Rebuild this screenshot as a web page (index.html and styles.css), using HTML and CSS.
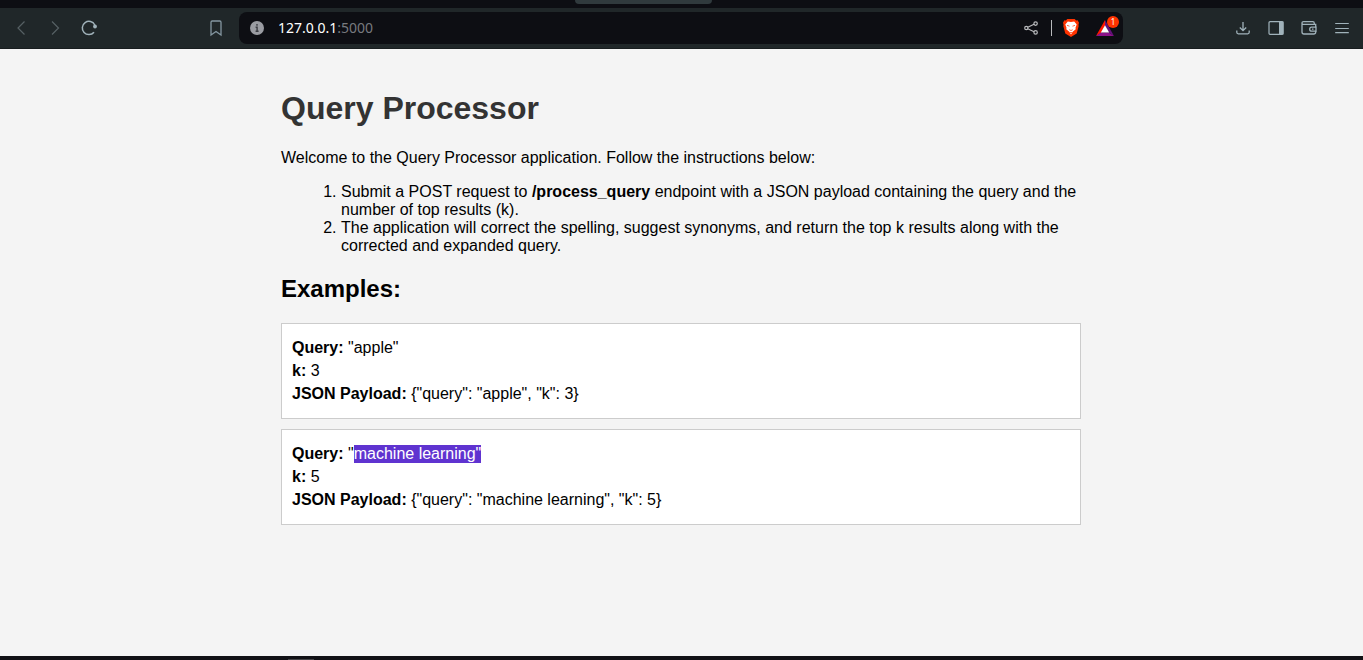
FILE: index.html
```html
<!DOCTYPE html>
<html lang="en">
<head>
<meta charset="utf-8">
<title>Query Processor</title>
<link rel="stylesheet" href="styles.css">
</head>
<body>
<div class="tab-strip"><div class="tab-group"></div></div>
<header class="toolbar">
  <nav class="nav" aria-label="Navigation">
    <button class="icon-button dim" aria-label="Back"><svg width="20" height="20" viewBox="0 0 20 20"><path d="M13.500 3.500 7 10l6.500 6.500"/></svg></button>
    <button class="icon-button dim" aria-label="Forward"><svg width="20" height="20" viewBox="0 0 20 20"><path d="M7 3.500 13.500 10 7 16.500"/></svg></button>
    <button class="icon-button" aria-label="Reload"><svg width="20" height="20" viewBox="0 0 20 20"><path d="M15 14.200A6.600 6.600 0 1 1 15.800 7" stroke-width="1.500"/><circle cx="16" cy="8.500" r="1.900" fill="currentColor" stroke="none"/></svg></button>
    <button class="icon-button bookmark" aria-label="Bookmark"><svg width="20" height="20" viewBox="0 0 20 20"><path d="M5 4.200q0-1.200 1.200-1.200h7.600q1.200 0 1.200 1.200V17l-5-3.500L5 17z" stroke-width="1.300"/></svg></button>
  </nav>
  <div class="address">
    <svg class="info" width="14" height="14" viewBox="0 0 14 14"><circle cx="7" cy="7" r="7" fill="#9a9ca2"/><path d="M7 3v1.700M5.600 6.300H7.100V10M5.600 10.200h3" stroke="#3b3d43" stroke-width="1.400" fill="none"/></svg>
    <div class="url">127.0.0.1<span class="port">:5000</span></div>
    <div class="address-actions">
      <button class="icon-button share" aria-label="Share"><svg width="14" height="14" viewBox="0 0 14 14"><path d="m3.800 6.300 6.200-3M3.800 7.700l6.200 3" stroke-width="1.200"/><circle cx="2.300" cy="7" r="1.600"/><circle cx="11.600" cy="2.600" r="1.700"/><circle cx="11.600" cy="11.400" r="1.700"/></svg></button>
      <span class="divider"></span>
      <button class="icon-button shield" aria-label="Shields"><svg width="18" height="20" viewBox="0 0 18 20"><path d="M5.300 1h7.400l1.400 1.500 1.500-.2L17 4.800l-.6 2.200.3 1-2 7.500L9 19l-5.700-3.500-2-7.500.3-1L1 4.800l1.400-2.500 1.500.2z" fill="#ff3300" stroke="none"/><path d="M5.800 3.500 9 4l3.200-.5 2.500 3-1.200 3.300.2 1.400-3 2.500L9 16.500l-1.700-2.800-3-2.500.2-1.400-1.200-3.300z" fill="#fff" stroke="none"/><path d="m5 7.300 2.500.9M13 7.300l-2.500.9M7.300 11.700l1.700.8 1.700-.8M8 14.500h2" stroke="#ff5b35" stroke-width=".9"/></svg></button>
      <button class="icon-button rewards" aria-label="Rewards, 1 notification"><svg width="18" height="16" viewBox="0 0 18 16"><path d="M9 0v6l-4 7-5 3z" fill="#ff1600" stroke="none"/><path d="m0 16 5-3.600h8L18 16z" fill="#8b1289" stroke="none"/><path d="m9 0 9 16-5-3.600L9 6z" fill="#64117c" stroke="none"/><path d="m9 5.300 4.200 7.300H4.800z" fill="#fff" stroke="none"/></svg><span class="badge">1</span></button>
    </div>
  </div>
  <div class="tools">
    <button class="icon-button" aria-label="Downloads"><svg width="16" height="16" viewBox="0 0 16 16"><path d="M8 2v8.500M4.800 7.500 8 10.700l3.200-3.200M1.800 10.500v1.800q0 1.500 1.500 1.500h9.400q1.500 0 1.500-1.500v-1.800" stroke-width="1.300"/></svg></button>
    <button class="icon-button" aria-label="Sidebar"><svg width="16" height="16" viewBox="0 0 16 16"><rect x="1" y="1.700" width="14" height="12.600" rx="1"/><path d="M11 1.500h4.500v13H11z" fill="currentColor" stroke="none"/></svg></button>
    <button class="icon-button" aria-label="Wallet"><svg width="16" height="16" viewBox="0 0 16 16"><path d="M14.700 4.800v-.5H2.500Q1 4.300 1 3t1.500-1.300h9.300q1.500 0 1.500 1.500v1M1 3v9q0 2 2 2h9.700q2 0 2-2v-1M14.700 4.500v2.700" stroke-width="1.300"/><path d="M15 7.200h-4.300a2 2 0 0 0 0 4H15z" stroke-width="1.300"/><path d="M11 9.200h1.500" stroke-width="1.300"/></svg></button>
    <button class="icon-button" aria-label="Menu"><svg width="16" height="16" viewBox="0 0 16 16"><path d="M1.200 3.500h13.600M1.200 8.500h13.600M1.200 12.700h13.600" stroke-width="1.200"/></svg></button>
  </div>
</header>
<main class="page">
  <div class="container">
    <h1>Query Processor</h1>
    <p>Welcome to the Query Processor application. Follow the instructions below:</p>
    <ol class="instructions">
      <li>Submit a POST request to <strong>/process_query</strong> endpoint with a JSON payload containing the query and the number of top results (k).</li>
      <li>The application will correct the spelling, suggest synonyms, and return the top k results along with the corrected and expanded query.</li>
    </ol>
    <h2>Examples:</h2>
    <div class="example">
      <p><strong>Query:</strong> "apple"</p>
      <p><strong>k:</strong> 3</p>
      <p><strong>JSON Payload:</strong> {"query": "apple", "k": 3}</p>
    </div>
    <div class="example">
      <p><strong>Query:</strong> "<span class="selected">machine learning"</span></p>
      <p><strong>k:</strong> 5</p>
      <p><strong>JSON Payload:</strong> {"query": "machine learning", "k": 5}</p>
    </div>
  </div>
</main>
<footer class="dock"><div class="dock-handle"></div></footer>
</body>
</html>
```

FILE: styles.css
```css
* { box-sizing: border-box; }

body {
  margin: 0;
  min-height: 100vh;
  display: flex;
  flex-direction: column;
  background: #f4f4f4;
  font-family: "Liberation Sans", Arial, sans-serif;
  font-size: 16px;
  line-height: 18px;
  color: #000;
}

.tab-strip {
  height: 8px;
  padding-left: 575px;
  background: #0d0e13;
}

.tab-group {
  width: 137px;
  height: 4px;
  border-radius: 0 0 6px 6px;
  background: #303a3d;
}

.toolbar {
  display: flex;
  align-items: center;
  height: 41px;
  background: #202729;
  border-bottom: 1px solid #181d1f;
  color: #a0b2ba;
}

.icon-button {
  display: flex;
  align-items: center;
  justify-content: center;
  flex: none;
  padding: 0;
  border: 0;
  background: none;
  color: inherit;
}

.icon-button svg {
  fill: none;
  stroke: currentColor;
  stroke-width: 1.2;
}

.dim { color: #566064; }

.nav {
  flex: none;
  display: flex;
  gap: 14px;
  width: 239px;
  padding: 0 13px 0 11px;
}

.bookmark { margin-left: auto; color: #8497a1; }

.address {
  flex: 1;
  display: flex;
  align-items: center;
  min-width: 0;
  height: 32px;
  padding: 0 8px 0 11px;
  border-radius: 8px;
  background: #0d0e13;
}

.info { flex: none; }

.url {
  flex: 1;
  margin-left: 14px;
  font-family: "Noto Sans", sans-serif;
  font-size: 14px;
  color: #fff;
}

.port { color: #777a7f; }

.address-actions {
  display: flex;
  align-items: center;
}

.share { color: #b9babd; }

.divider {
  width: 1px;
  height: 16px;
  margin: 0 10px 0 13px;
  background: #b9babd;
}

.rewards {
  position: relative;
  margin-left: 16px;
  margin-right: 1px;
}

.badge {
  position: absolute;
  top: -4px;
  right: -5px;
  width: 12px;
  height: 12px;
  border-radius: 50%;
  background: #ff3300;
  color: #fff;
  font-family: "Noto Sans", sans-serif;
  font-size: 8px;
  line-height: 12px;
  text-align: center;
}

.tools {
  flex: none;
  display: flex;
  justify-content: flex-end;
  gap: 17px;
  width: 240px;
  padding-right: 13px;
}

.page {
  flex: 1;
  padding: 20px;
}

.container {
  max-width: 801px;
  padding-right: 1px;
  margin: 0 auto;
}

h1 {
  margin: 21px 0 22px;
  font-size: 32px;
  line-height: 37px;
  color: #333;
}

h2 {
  margin: 20px 0;
  font-size: 24px;
  line-height: 28px;
}

p { margin: 16px 0; }

.instructions {
  margin: 16px 0 20px 20px;
  padding-left: 40px;
}

.example {
  margin-bottom: 10px;
  padding: 10px;
  border: 1px solid #ccc;
  background: #fff;
}

.example p { margin: 5px 0; }

.selected {
  display: inline-block;
  background: #5f33d0;
  color: #fff;
}

.dock {
  height: 4px;
  padding: 3px 0 0 288px;
  background: #111115;
}

.dock-handle {
  width: 26px;
  height: 1px;
  background: #444448;
}
```
